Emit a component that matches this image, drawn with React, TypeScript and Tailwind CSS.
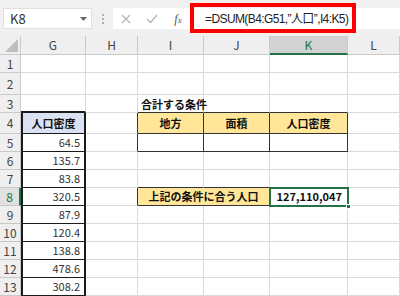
import React from "react";

const F = { fontFamily: '"Noto Sans CJK JP", "Noto Sans", sans-serif' };

const HDR = "flex items-center justify-center bg-[#efefef] border-r border-b border-[#c9c9c9] text-[12px] text-[#444]";
const CELL = "flex items-center bg-white border-r border-b border-[#dadada] text-[11px] text-[#222] overflow-visible whitespace-nowrap";

function RowHeader({ n, sel }: { n: number; sel?: boolean }) {
  return sel ? (
    <div className="flex items-center justify-center bg-[#e1e1e1] border-b border-[#c9c9c9] border-r-2 border-r-[#217346] text-[12px] text-[#217346]">
      {n}
    </div>
  ) : (
    <div className={HDR}>{n}</div>
  );
}

const G_NUM = "flex items-center justify-end pr-[4px] bg-white border-l-2 border-r-2 border-b border-[#1a1a1a] text-[11px] text-[#333]";

export default function App() {
  const nums: [number, string][] = [
    [5, "64.5"],
    [6, "135.7"],
    [7, "83.8"],
    [8, "320.5"],
    [9, "87.9"],
    [10, "120.4"],
    [11, "138.8"],
    [12, "478.6"],
    [13, "308.2"],
  ];

  return (
    <div className="w-[400px] h-[296px] overflow-hidden bg-white relative" style={F}>
      {/* formula bar */}
      <div className="h-[36px] bg-[#f0f0f0] flex items-start pt-[8px]">
        <div className="ml-[3px] w-[89px] h-[21px] bg-white border border-[#e0e0e0] flex items-center justify-between pl-[6px] pr-[4px]">
          <span className="text-[13px] text-[#333]">K8</span>
          <svg width="7" height="4" viewBox="0 0 7 4">
            <path d="M0 0 L7 0 L3.5 4 Z" fill="#666" />
          </svg>
        </div>
        <div className="w-[21px] h-[21px] flex flex-col items-center justify-center gap-[2px]">
          <span className="w-[2px] h-[2px] bg-[#b0b0b0]" />
          <span className="w-[2px] h-[2px] bg-[#b0b0b0]" />
          <span className="w-[2px] h-[2px] bg-[#b0b0b0]" />
        </div>
        <div className="flex-1 h-[21px] bg-white flex items-center">
          <div className="w-[26px] flex justify-center">
            <svg width="10" height="10" viewBox="0 0 10 10">
              <path d="M1 1 L9 9 M9 1 L1 9" stroke="#b5b5b5" strokeWidth="1.2" />
            </svg>
          </div>
          <div className="w-[26px] flex justify-center">
            <svg width="12" height="10" viewBox="0 0 12 10">
              <path d="M1 5 L4.5 8.5 L11 1" stroke="#b5b5b5" strokeWidth="1.2" fill="none" />
            </svg>
          </div>
          <div className="w-[26px] flex justify-center">
            <span className="text-[12px] italic text-[#555]" style={{ fontFamily: '"Liberation Serif", serif' }}>
              f<span className="text-[9px]">x</span>
            </span>
          </div>
          <div
            className="ml-[14px] text-[12px] tracking-[-0.6px] text-[#222] whitespace-nowrap"
            style={{ fontFamily: '"Liberation Sans", "Noto Sans CJK JP", sans-serif' }}
          >
            =DSUM(B4:G51,”人口”,I4:K5)
          </div>
        </div>
      </div>
      {/* red annotation box */}
      <div className="absolute left-[190px] top-[3px] w-[166px] h-[30px] border-[4px] border-[#ff0000] pointer-events-none" />

      {/* grid */}
      <div className="grid grid-cols-[21px_65px_52px_66px_66px_78px_52px] grid-rows-[19px_18px_22px_18px_21px_repeat(9,18px)]">
        {/* header row */}
        <div className="relative bg-[#efefef] border-r border-b border-[#c9c9c9]">
          <svg className="absolute right-[2px] bottom-[2px]" width="13" height="13" viewBox="0 0 13 13">
            <path d="M13 0 L13 13 L0 13 Z" fill="#bdbdbd" />
          </svg>
        </div>
        <div className={HDR}>G</div>
        <div className={HDR}>H</div>
        <div className={HDR}>I</div>
        <div className={HDR}>J</div>
        <div className="flex items-center justify-center bg-[#d2d2d2] border-r border-[#c9c9c9] border-b-2 border-b-[#217346] text-[12px] text-[#217346]">K</div>
        <div className={HDR}>L</div>

        {/* row 1 */}
        <RowHeader n={1} />
        <div className={CELL} />
        <div className={CELL} />
        <div className={CELL} />
        <div className={CELL} />
        <div className={CELL} />
        <div className={CELL} />

        {/* row 2 */}
        <RowHeader n={2} />
        <div className={CELL} />
        <div className={CELL} />
        <div className={CELL} />
        <div className={CELL} />
        <div className={CELL} />
        <div className={CELL} />

        {/* row 3 */}
        <RowHeader n={3} />
        <div className="bg-white border-r border-[#dadada] border-b-2 border-b-[#1a1a1a]" />
        <div className={CELL} />
        <div className="relative bg-white border-r border-[#dadada] border-b border-b-[#333]">
          <span className="absolute left-[3px] top-[1px] text-[11px] font-bold text-[#111] whitespace-nowrap">合計する条件</span>
        </div>
        <div className="bg-white border-r border-[#dadada] border-b border-b-[#333]" />
        <div className="bg-white border-r border-[#dadada] border-b border-b-[#333]" />
        <div className={CELL} />

        {/* row 4 */}
        <RowHeader n={4} />
        <div className="flex items-center justify-center bg-[#d9e1f2] border-l-2 border-r-2 border-b border-[#1a1a1a] text-[11px] font-bold text-[#111]">人口密度</div>
        <div className="bg-white border-r border-b border-[#dadada] border-r-[#333]" />
        <div className="flex items-center justify-center bg-[#ffe699] border-r border-b border-[#333] text-[11px] font-bold text-[#111]">地方</div>
        <div className="flex items-center justify-center bg-[#ffe699] border-r border-b border-[#333] text-[11px] font-bold text-[#111]">面積</div>
        <div className="flex items-center justify-center bg-[#ffe699] border-r border-b border-[#333] text-[11px] font-bold text-[#111]">人口密度</div>
        <div className={CELL} />

        {/* rows 5..13 */}
        {nums.map(([n, v]) => (
          <React.Fragment key={n}>
            <RowHeader n={n} sel={n === 8} />
            <div className={G_NUM}>{v}</div>
            {n === 5 ? (
              <>
                <div className="bg-white border-r border-b border-[#dadada] border-r-[#333]" />
                <div className="bg-white border-r border-b border-[#333]" />
                <div className="bg-white border-r border-b border-[#333]" />
                <div className="bg-white border-r border-b border-[#333]" />
                <div className={CELL} />
              </>
            ) : n === 7 ? (
              <>
                <div className={CELL} />
                <div className="bg-white border-r border-[#dadada] border-b border-b-[#333]" />
                <div className="bg-white border-r border-[#dadada] border-b border-b-[#333]" />
                <div className="bg-white border-r border-[#dadada] border-b border-b-[#333]" />
                <div className={CELL} />
              </>
            ) : n === 8 ? (
              <>
                <div className="bg-white border-r border-b border-[#dadada] border-r-[#333]" />
                <div className="col-span-2 flex items-center justify-center bg-[#ffe699] border-r border-b border-[#333] text-[11px] font-bold text-[#111]">上記の条件に合う人口</div>
                <div className="relative flex items-center justify-end pr-[5px] bg-white border-r border-b border-[#333] text-[11px] font-bold text-[#111]">
                  127,110,047
                  <div className="absolute left-[-1px] top-[-1px] right-[-2px] bottom-[-2px] border-2 border-[#217346]" />
                  <div className="absolute right-[-4px] bottom-[-4px] w-[5px] h-[5px] bg-[#217346] border border-white" />
                </div>
                <div className={CELL} />
              </>
            ) : (
              <>
                <div className={CELL} />
                <div className={CELL} />
                <div className={CELL} />
                <div className={CELL} />
                <div className={CELL} />
              </>
            )}
          </React.Fragment>
        ))}
      </div>
    </div>
  );
}
